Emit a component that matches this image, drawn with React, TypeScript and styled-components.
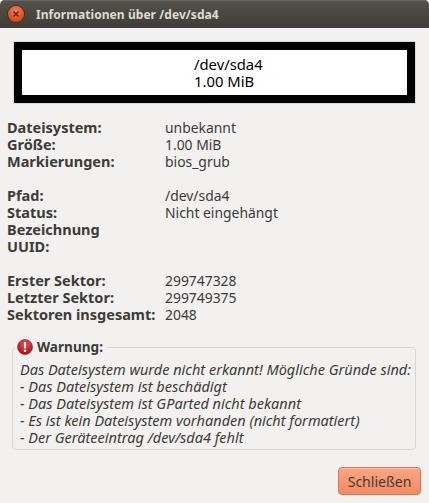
import React from "react";
import styled, { createGlobalStyle } from "styled-components";

const Global = createGlobalStyle`
  html, body { margin: 0; padding: 0; width: 429px; height: 503px; overflow: hidden; background: #f2f1f0; }
  * { box-sizing: border-box; }
`;
const Win = styled.div`
  width: 429px; height: 503px; display: flex; flex-direction: column;
  background: #f2f1f0; color: #3c3b37;
  font-family: "Noto Sans", "Open Sans", sans-serif; font-size: 13.9px; line-height: 17px;
`;
const TitleBar = styled.div`
  height: 28px; flex: none; display: flex; align-items: center; gap: 12px; padding: 0 12px 0 8px;
  background: linear-gradient(#55524c, #3e3d38); border-radius: 5px 5px 0 0;
  box-shadow: inset 0 1px 0 #6a675f;
`;
const CloseBtn = styled.div`
  width: 16px; height: 16px; border-radius: 50%; flex: none; display: flex; align-items: center; justify-content: center;
  background: radial-gradient(circle at 50% 35%, #f5825a, #dd4814 70%); box-shadow: 0 0 0 1px #33322e;
`;
const Title = styled.div`
  color: #dfdbd2; font-weight: 700; font-size: 12px; letter-spacing: 0.06px; white-space: nowrap;
`;
const PartWrap = styled.div`
  margin: 13px 13px 0 13px; height: 63px; border: 1px solid #dcdad6; flex: none;
`;
const PartBar = styled.div`
  height: 61px; border: 8px solid #000; background: #fff; color: #000; padding-left: 172px;
  display: flex; flex-direction: column; justify-content: center;
  font-size: 14.8px; line-height: 17px;
`;
const Groups = styled.div`
  display: flex; flex-direction: column; gap: 17px; padding: 15px 0 0 7px; flex: none;
`;
const Group = styled.div`display: flex; flex-direction: column;`;
const Row = styled.div`display: flex; height: 17px;`;
const Key = styled.div`width: 158px; flex: none; font-weight: 700; font-size: 14.5px; white-space: nowrap;`;
const Val = styled.div`white-space: nowrap;`;
const Frame = styled.div`
  position: relative; margin: 24px 13px 0 12px; height: 103px; flex: none;
  border: 1px solid #d8d5d0; border-radius: 4px; padding: 13px 0 0 7px;
  font-style: italic; font-size: 14.5px;
`;
const Legend = styled.div`
  position: absolute; left: 2px; top: -10px; padding: 0 4px 0 2px; background: #f2f1f0;
  display: flex; align-items: center; gap: 4px; font-style: normal; font-weight: 700; font-size: 13.6px;
`;
const Line = styled.div`white-space: nowrap; height: 17px;`;
const Footer = styled.div`
  display: flex; justify-content: flex-end; padding: 17px 8px 0 0; flex: none;
`;
const Button = styled.button`
  width: 83px; height: 28px; border: 1px solid #cf7a59; border-radius: 4px; padding: 0;
  background: linear-gradient(#f9a685, #f58a60); color: #3c3b37;
  font-family: inherit; font-size: 14px; box-shadow: inset 0 1px 0 #fbc0a6, 0 0 1px #d9d5cf;
`;

const rows: [string, string][][] = [
  [["Dateisystem:", "unbekannt"], ["Größe:", "1.00 MiB"], ["Markierungen:", "bios_grub"]],
  [["Pfad:", "/dev/sda4"], ["Status:", "Nicht eingehängt"], ["Bezeichnung", ""], ["UUID:", ""]],
  [["Erster Sektor:", "299747328"], ["Letzter Sektor:", "299749375"], ["Sektoren insgesamt:", "2048"]],
];
const lines = [
  "Das Dateisystem wurde nicht erkannt! Mögliche Gründe sind:",
  "- Das Dateisystem ist beschädigt",
  "- Das Dateisystem ist GParted nicht bekannt",
  "- Es ist kein Dateisystem vorhanden (nicht formatiert)",
  "- Der Geräteeintrag /dev/sda4 fehlt",
];

export default function App() {
  return (
    <Win>
      <Global />
      <TitleBar>
        <CloseBtn>
          <svg width="8" height="8" viewBox="0 0 8 8"><path d="M1.5 1.5l5 5M6.5 1.5l-5 5" stroke="#4a2012" strokeWidth="1.3" /></svg>
        </CloseBtn>
        <Title>Informationen über /dev/sda4</Title>
      </TitleBar>
      <PartWrap>
        <PartBar><div>/dev/sda4</div><div>1.00 MiB</div></PartBar>
      </PartWrap>
      <Groups>
        {rows.map((g, i) => (
          <Group key={i}>
            {g.map(([k, v]) => <Row key={k}><Key>{k}</Key><Val>{v}</Val></Row>)}
          </Group>
        ))}
      </Groups>
      <Frame>
        <Legend>
          <svg width="16" height="16" viewBox="0 0 16 16">
            <defs><radialGradient id="r" cx="50%" cy="30%" r="70%"><stop offset="0" stopColor="#e8555a" /><stop offset="1" stopColor="#a30f1a" /></radialGradient></defs>
            <circle cx="8" cy="8" r="7.5" fill="url(#r)" stroke="#8c1a1f" strokeWidth="0.6" />
            <rect x="7" y="3" width="2" height="6.5" rx="0.8" fill="#fff" />
            <circle cx="8" cy="11.8" r="1.2" fill="#fff" />
          </svg>
          <span>Warnung:</span>
        </Legend>
        {lines.map(l => <Line key={l}>{l}</Line>)}
      </Frame>
      <Footer><Button>Schließen</Button></Footer>
    </Win>
  );
}
